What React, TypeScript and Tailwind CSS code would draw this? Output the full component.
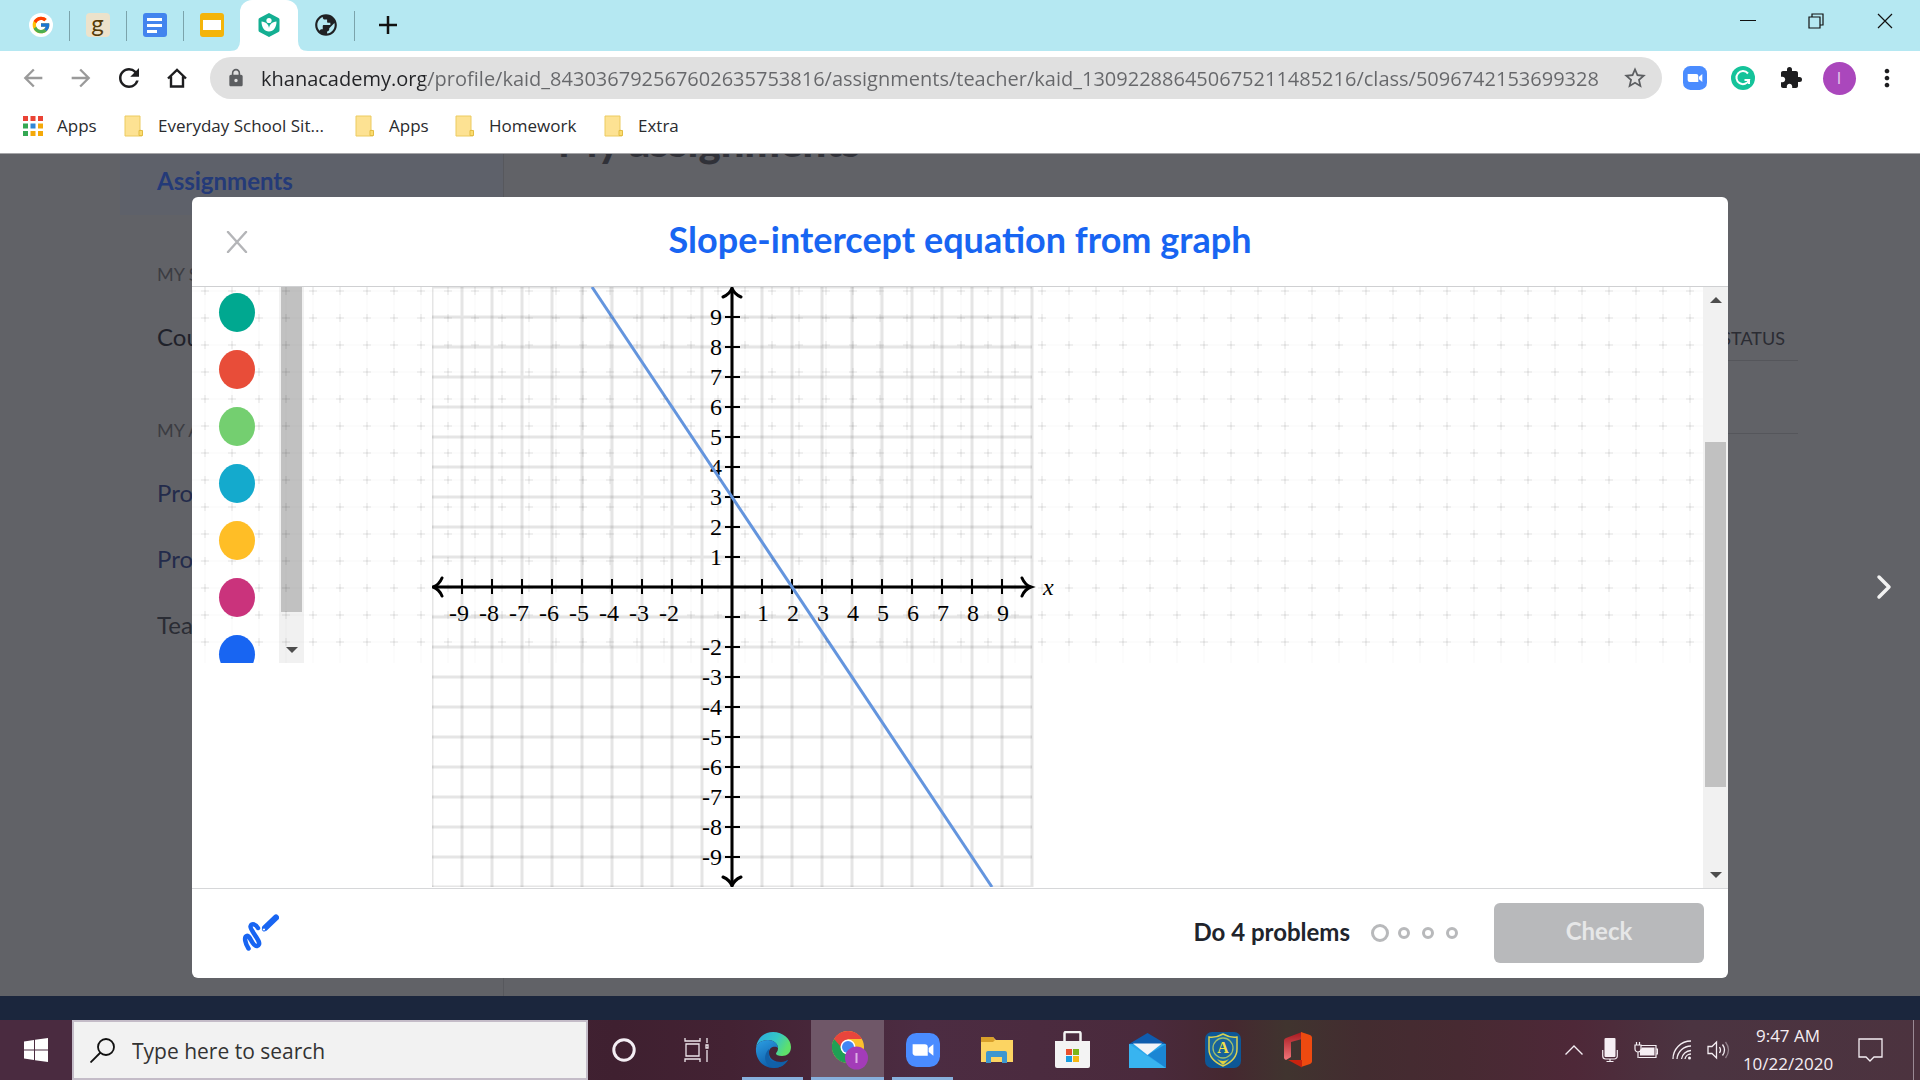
import React from "react";
import {
  MdArrowBack,
  MdArrowForward,
  MdExtension,
  MdLock,
  MdMoreVert,
  MdPublic,
  MdRefresh,
  MdStarBorder,
} from "react-icons/md";
import { FcGoogle } from "react-icons/fc";

const SANS = "font-['Open_Sans','Noto_Sans',sans-serif]";
const LATO = "font-['Lato','Open_Sans',sans-serif]";

const STUDENT = "kaid_843036792567602635753816";
const TEACHER = "kaid_1309228864506752" + "11485216";
const CLASS_ID = "5096742153699328";
const URL_TEXT = `khanacademy.org/profile/${STUDENT}/assignments/teacher/${TEACHER}/class/${CLASS_ID}`;

/* ---------- Browser chrome ---------- */

function ZoomLogo({ className }: { className: string }) {
  return (
    <svg viewBox="0 0 36 36" preserveAspectRatio="none" className={className} aria-hidden="true">
      <rect width="36" height="36" rx="11" fill="#4a8cff" />
      <path d="M7 12h13a3 3 0 0 1 3 3v9H10a3 3 0 0 1-3-3z" fill="#fff" />
      <path d="M24 16l5-4v12l-5-4z" fill="#fff" />
    </svg>
  );
}

function DocsIcon() {
  return (
    <svg viewBox="0 0 24 24" className="h-6 w-6" aria-hidden="true">
      <rect width="24" height="24" rx="3" fill="#4384ee" />
      <path d="M4 5h15v3H4zM4 11h15v3H4zM4 17h10v3H4z" fill="#fff" />
    </svg>
  );
}

function SlidesIcon() {
  return (
    <svg viewBox="0 0 24 24" className="h-6 w-6" aria-hidden="true">
      <rect width="24" height="24" rx="3" fill="#f4b40a" />
      <rect x="3" y="7" width="18" height="10" fill="#fff" />
    </svg>
  );
}

function LeafIcon() {
  return (
    <svg viewBox="0 0 24 24" className="h-6 w-6" aria-hidden="true">
      <path d="M12 0l9.500 5a2 2 0 0 1 1 2v10a2 2 0 0 1-1 2L12 24l-9.500-5a2 2 0 0 1-1-2V7a2 2 0 0 1 1-2z" fill="#14af92" />
      <circle cx="12" cy="7.500" r="2.600" fill="#fff" />
      <path d="M4.500 8.500c4.500 .3 7 3 7.500 6.500 .5-3.500 3-6.200 7.500-6.500 0 6-3 10-7.500 10S4.500 14.500 4.500 8.500z" fill="#fff" />
    </svg>
  );
}

function TabStrip() {
  return (
    <div className="flex h-[51px] items-stretch bg-[#b5e8f2]">
      <div className="flex flex-1 items-center pl-3">
        <button aria-label="Google tab" className="flex w-[57px] items-center justify-center pb-0.5">
          <span className="flex h-6 w-6 items-center justify-center rounded-full bg-white">
            <FcGoogle className="h-5 w-5" />
          </span>
        </button>
        <i className="-mr-px h-[30px] w-px bg-[#7ba3ab]" />
        <button aria-label="Goodreads tab" className="flex w-[57px] items-center justify-center pb-0.5">
          <span className="flex h-6 w-6 items-center justify-center rounded-sm bg-[#ece2cb] pb-1 font-['Lato',sans-serif] text-2xl leading-none text-[#553b08]">
            g
          </span>
        </button>
        <i className="-mr-px h-[30px] w-px bg-[#7ba3ab]" />
        <button aria-label="Docs tab" className="flex w-[57px] items-center justify-center pb-0.5">
          <DocsIcon />
        </button>
        <i className="-mr-px h-[30px] w-px bg-[#7ba3ab]" />
        <button aria-label="Slides tab" className="flex w-[57px] items-center justify-center pb-0.5">
          <SlidesIcon />
        </button>
        <button aria-label="Khan Academy tab" className="relative flex h-full w-[58px] items-center justify-center rounded-t-xl bg-white pb-0.5">
          <svg viewBox="0 0 10 10" className="absolute right-full bottom-0 h-[10px] w-[10px]" aria-hidden="true">
            <path d="M10 0v10H0Q10 10 10 0z" fill="#fff" />
          </svg>
          <svg viewBox="0 0 10 10" className="absolute bottom-0 left-full h-[10px] w-[10px]" aria-hidden="true">
            <path d="M0 0v10h10Q0 10 0 0z" fill="#fff" />
          </svg>
          <LeafIcon />
        </button>
        <button aria-label="New page tab" className="flex w-14 items-center justify-center pb-0.5 text-[#202124]">
          <MdPublic className="h-[26px] w-[26px] -scale-x-100" />
        </button>
        <i className="h-[30px] w-px bg-[#7ba3ab]" />
        <button aria-label="New tab" className="flex w-[66px] items-center justify-center pb-0.5">
          <svg viewBox="0 0 18 18" className="h-[18px] w-[18px]" aria-hidden="true">
            <path d="M9 0v18M0 9h18" stroke="#111" strokeWidth="2.500" />
          </svg>
        </button>
      </div>
      <div className="flex h-[42px] text-[#111]">
        <button aria-label="Minimize" className="flex w-[68px] items-center justify-center">
          <svg viewBox="0 0 16 16" className="h-4 w-4"><path d="M0 7.500h16" stroke="currentColor" /></svg>
        </button>
        <button aria-label="Restore" className="flex w-[68px] items-center justify-center">
          <svg viewBox="0 0 16 16" className="h-4 w-4" fill="none" stroke="currentColor" strokeWidth="1.200">
            <path d="M1 4h11v11H1zM4 4V1h11v11h-3" />
          </svg>
        </button>
        <button aria-label="Close window" className="flex w-[70px] items-center justify-center">
          <svg viewBox="0 0 16 16" className="h-4 w-4"><path d="M1 1l14 14M15 1L1 15" stroke="currentColor" strokeWidth="1.200" /></svg>
        </button>
      </div>
    </div>
  );
}

function Toolbar() {
  return (
    <div className="flex h-[54px] items-center bg-white px-[9px]">
      <button aria-label="Back" className="flex w-12 justify-center text-[#9a9a9a]"><MdArrowBack className="h-7 w-7" /></button>
      <button aria-label="Forward" className="flex w-12 justify-center text-[#9a9a9a]"><MdArrowForward className="h-7 w-7" /></button>
      <button aria-label="Reload" className="flex w-12 justify-center text-[#1d1d1f]"><MdRefresh className="h-[30px] w-[30px]" /></button>
      <button aria-label="Home" className="flex w-12 justify-center">
        <svg viewBox="0 0 20 20" className="h-5 w-5" fill="none" stroke="#1d1d1f" strokeWidth="2.400" aria-hidden="true">
          <path d="M1 10.500L10 2l9 8.500M4 8.500V18.500h12V8.500" />
        </svg>
      </button>
      <div className="ml-[9px] flex h-[42px] flex-1 items-center rounded-full bg-[#e0e0e0] pr-[14px] pl-4">
        <MdLock className="h-5 w-5 text-[#5c5e61]" />
        <input
          aria-label="Address"
          readOnly
          value={URL_TEXT}
          className={`${SANS} ml-[15px] min-w-0 flex-1 bg-[linear-gradient(90deg,#222326_0_164px,#66676a_164px)] bg-clip-text pt-0.5 text-[20px] leading-[32px] text-transparent outline-none`}
        />
        <button aria-label="Bookmark this page"><MdStarBorder className="h-[26px] w-[26px] text-[#5c5e61]" /></button>
      </div>
      <div className="ml-[9px] flex items-center">
        <button aria-label="Zoom extension" className="flex w-12 justify-center"><ZoomLogo className="h-6 w-6" /></button>
        <button aria-label="Grammarly" className="flex w-12 justify-center">
          <svg viewBox="0 0 24 24" className="h-6 w-6" fill="none" aria-hidden="true">
            <circle cx="12" cy="12" r="12" fill="#15c39a" />
            <path d="M17 7.500A6.500 6.500 0 1 0 18 14h-4.500M18 14v4" stroke="#fff" strokeWidth="2" />
          </svg>
        </button>
        <button aria-label="Extensions" className="flex w-12 justify-center text-[#1d1d1f]"><MdExtension className="h-6 w-6" /></button>
        <button aria-label="Profile" className="flex w-12 justify-center">
          <span className={`${SANS} flex h-[33px] w-[33px] items-center justify-center rounded-full bg-[#aa47bc] text-base text-[#e8cdee]`}>I</span>
        </button>
        <button aria-label="Menu" className="flex w-12 justify-center text-[#1d1d1f]"><MdMoreVert className="h-7 w-7" /></button>
      </div>
    </div>
  );
}

const APP_DOTS = ["#ea4335", "#ea4335", "#ea4335", "#34a853", "#3186d6", "#f4a90a", "#34a853", "#f4a90a", "#f4a90a"];

function Folder({ label, className }: { label: string; className: string }) {
  return (
    <a href="#" className={`flex items-center gap-[15px] ${className}`}>
      <svg viewBox="0 0 19 22" className="h-[22px] w-[19px]" aria-hidden="true">
        <path d="M1 1h15v14l2 1v5H1z" fill="#fde293" stroke="#eccb61" />
        <path d="M15 15.500h3.500v5H15z" fill="#fbdc70" stroke="#e3bd45" />
      </svg>
      {label}
    </a>
  );
}

function BookmarksBar() {
  return (
    <nav className={`${SANS} flex h-[49px] items-center border-b border-[#a5a5a8] bg-white pb-1.5 pl-[23px] text-[17px] leading-6 text-[#2a2b2e]`}>
      <a href="#" className="flex w-[101px] items-center gap-[14px]">
        <svg viewBox="0 0 20 20" className="h-5 w-5" aria-hidden="true">
          {APP_DOTS.map((c, i) => (
            <rect key={i} x={(i % 3) * 7.5} y={Math.floor(i / 3) * 7.5} width="5" height="5" fill={c} />
          ))}
        </svg>
        Apps
      </a>
      <Folder label="Everyday School Sit..." className="w-[231px]" />
      <Folder label="Apps" className="w-[100px]" />
      <Folder label="Homework" className="w-[149px]" />
      <Folder label="Extra" className="" />
    </nav>
  );
}

/* ---------- Dimmed page behind the dialog ---------- */

function BackgroundPage() {
  return (
    <div className={`${LATO} flex flex-1 overflow-hidden bg-[#616267] pl-[120px] text-2xl`}>
      <nav className="w-[384px] shrink-0 border-r border-[#57585d] text-[#24262e]">
        <a href="#" className="flex h-[61px] items-center bg-[#5e616a] pb-2 pl-[37px] font-bold text-[#243a78]">Assignments</a>
        <div className="flex flex-col pl-[37px]">
          <h2 className="mt-[47px] text-[18px] leading-6 text-[#3b3c42]">MY STUFF</h2>
          <a href="#" className="mt-[35px] leading-8 text-[#1f212a]">Courses</a>
          <h2 className="mt-[65px] text-[18px] leading-6 text-[#3b3c42]">MY ACCOUNT</h2>
          <a href="#" className="mt-[35px] leading-8 text-[#232b4b]">Progress</a>
          <a href="#" className="mt-[34px] leading-8 text-[#232b4b]">Profile</a>
          <a href="#" className="mt-[34px] leading-8 text-[#2a2c34]">Teachers</a>
        </div>
      </nav>
      <div className="mr-[122px] ml-[54px] flex-1">
        <h1 className="-mt-[38px] text-[42px] leading-[50px] font-black text-[#303138]">My assignments</h1>
        <div className="mt-[157px] border-b border-[#55565b] pr-[13px] pb-[7px] text-right text-[18px] leading-[30px] text-[#2b2c33]">STATUS</div>
        <div className="h-[73px] border-b border-[#55565b]" />
      </div>
    </div>
  );
}

/* ---------- Exercise dialog ---------- */

const UNIT = 30;
const TICKS = [-9, -8, -7, -6, -5, -4, -3, -2, -1, 1, 2, 3, 4, 5, 6, 7, 8, 9];
const GRID = Array.from({ length: 21 }, (_, i) => i * UNIT);

function Graph() {
  return (
    <svg viewBox="0 0 660 600" className="h-[600px] w-[660px] shrink-0" role="img" aria-label="Line with slope -3/2 and y-intercept 3">
      <g stroke="#000" strokeOpacity="0.1" strokeWidth="3">
        {GRID.map((p) => (
          <path key={p} d={`M${p} 0V600M0 ${p}H600`} />
        ))}
      </g>
      <g stroke="#000" fill="none">
        <path d="M2 300H598M300 2V598" strokeWidth="3" />
        <path
          d="M10 291Q7 298 1 300Q7 302 10 309M590 291Q593 298 599 300Q593 302 590 309M291 10Q298 7 300 1Q302 7 309 10M291 590Q298 593 300 599Q302 593 309 590"
          strokeWidth="3"
          strokeLinecap="round"
        />
        {TICKS.map((t) => (
          <path key={t} d={`M${300 + t * UNIT} 292v15M293 ${300 - t * UNIT}h15`} strokeWidth="2" />
        ))}
      </g>
      <g className="font-['Liberation_Serif',serif] text-[24px]" fill="#000">
        {TICKS.filter((t) => t !== -1).map((t) => (
          <React.Fragment key={t}>
            <text x={301 + t * UNIT - (t < 0 ? 4 : 0)} y="334" textAnchor="middle">{t}</text>
            <text x="290" y={308 - t * UNIT} textAnchor="end">{t}</text>
          </React.Fragment>
        ))}
        <text x="611" y="308" className="italic">x</text>
      </g>
      <path d="M160 0L560 600" stroke="#6495de" strokeWidth="3" />
    </svg>
  );
}

const PALETTE = [
  { name: "Teal", color: "bg-[#00a890]" },
  { name: "Red", color: "bg-[#e84d39]" },
  { name: "Green", color: "bg-[#74cf70]" },
  { name: "Cyan", color: "bg-[#14aacd]" },
  { name: "Yellow", color: "bg-[#ffbe26]" },
  { name: "Magenta", color: "bg-[#ca337c]" },
  { name: "Blue", color: "bg-[#1865f2]" },
];

function Arrow({ up = false }: { up?: boolean }) {
  return (
    <svg viewBox="0 0 12 6" className="h-[6px] w-3" aria-hidden="true">
      <path d={up ? "M0 6L6 0l6 6z" : "M0 0h12L6 6z"} fill="#4d4d4d" />
    </svg>
  );
}

function Whiteboard() {
  return (
    <div className="pointer-events-none absolute inset-x-0 top-0 h-[376px] overflow-hidden">
      <div className="absolute inset-y-0 left-[87px] flex w-[25px] flex-col items-center bg-[#f1f1f1]">
        <div className="h-[325px] w-[21px] bg-[#c1c1c1]" />
        <div className="mt-[35px]"><Arrow /></div>
      </div>
      <svg className="absolute inset-0 h-full w-full" aria-hidden="true">
        <defs>
          <pattern id="board" x="0" y="-9" width="27" height="27" patternUnits="userSpaceOnUse">
            <path d="M13 0V27M0 13H27" stroke="#000" strokeOpacity="0.025" />
            <path d="M13 9v8M9 13h8" stroke="#000" strokeOpacity="0.1" />
          </pattern>
        </defs>
        <rect width="100%" height="100%" fill="url(#board)" />
      </svg>
      <div className="absolute top-[6px] left-[27px] flex flex-col gap-[18px]">
        {PALETTE.map((p) => (
          <button key={p.name} aria-label={p.name} className={`h-[39px] w-9 shrink-0 rounded-[50%] ${p.color}`} />
        ))}
      </div>
    </div>
  );
}

function ExerciseDialog() {
  return (
    <div role="dialog" aria-label="Slope-intercept equation from graph" className={`${LATO} flex flex-1 flex-col overflow-hidden rounded-md bg-white`}>
      <header className="flex h-[90px] shrink-0 items-center border-b border-[#cfd0d2] px-[34px]">
        <button aria-label="Close" className="w-[22px]">
          <svg viewBox="0 0 22 22" className="h-[22px] w-[22px]" aria-hidden="true">
            <path d="M2 1l18 20M20 1L2 21" stroke="#b4b5b8" strokeWidth="2.400" strokeLinecap="round" />
          </svg>
        </button>
        <h2 className="mr-[22px] flex-1 pb-[5px] text-center text-[36px] leading-[44px] font-bold text-[#1865f2]">Slope-intercept equation from graph</h2>
      </header>
      <div className="flex min-h-0 flex-1">
        <div className="relative flex-1 overflow-hidden pl-60">
          <Graph />
          <Whiteboard />
        </div>
        <div className="flex w-[25px] flex-col items-center bg-[#f1f1f1]">
          <div className="flex h-[155px] items-start pt-[10px]"><Arrow up /></div>
          <div className="h-[345px] w-[21px] bg-[#c1c1c1]" />
          <div className="flex flex-1 items-end pb-[10px]"><Arrow /></div>
        </div>
      </div>
      <footer className="flex h-[90px] shrink-0 items-center border-t border-[#d6d7d9] pr-6 pb-0.5 pl-[50px]">
        <button aria-label="Scratchpad">
          <svg viewBox="0 0 37 37" className="h-[37px] w-[37px]" fill="none" stroke="#1865f2" strokeLinecap="round" strokeLinejoin="round" aria-hidden="true">
            <path d="M6.500 34.500C3 29 2 23 4.500 22C8.500 20.500 10 33 15 32C22.500 30 8 17 8.500 12.500C9.500 8.500 14 10.500 16 14" strokeWidth="4.500" />
            <path d="M23 14L34 3.500" strokeWidth="6" />
            <circle cx="22" cy="15.500" r="1.600" strokeWidth="1" fill="#fff" />
          </svg>
        </button>
        <span className="ml-auto pb-0.5 text-2xl leading-8 font-bold text-[#21242c]">Do 4 problems</span>
        <div className="mr-9 ml-[21px] flex items-center gap-3">
          <i className="-mr-[3px] h-[18px] w-[18px] rounded-full border-[3px] border-[#b8b9bb]" />
          <i className="h-3 w-3 rounded-full border-[3px] border-[#b8b9bb]" />
          <i className="h-3 w-3 rounded-full border-[3px] border-[#b8b9bb]" />
          <i className="h-3 w-3 rounded-full border-[3px] border-[#b8b9bb]" />
        </div>
        <button disabled className="h-[60px] w-[210px] rounded-md bg-[#b8b9bb] pb-1 text-2xl leading-8 font-bold text-[#e6e7e8]">Check</button>
      </footer>
    </div>
  );
}

/* ---------- Windows taskbar ---------- */

function EdgeLogo() {
  return (
    <svg viewBox="0 0 36 36" className="h-9 w-9" aria-hidden="true">
      <defs>
        <linearGradient id="eg1" x1="0" y1="0" x2="1" y2="0.4">
          <stop offset="0" stopColor="#2aa9e6" />
          <stop offset="0.6" stopColor="#35c7c5" />
          <stop offset="1" stopColor="#5fe06a" />
        </linearGradient>
        <linearGradient id="eg2" x1="0" y1="0" x2="0.6" y2="1">
          <stop offset="0" stopColor="#2c9fe3" />
          <stop offset="1" stopColor="#0a56a4" />
        </linearGradient>
      </defs>
      <path d="M1 16C2 6 9 0 18 0c10 0 18 7 18 15 0 6-4 9-9 9-4 0-6-1-6-2.500 0-1 2-2 2-5C23 11 18 8 13 8 7 8 2 11 1 16z" fill="url(#eg1)" />
      <path d="M1 16C2 11 7 8 13 8c5 0 10 3 10 8-2-2-9-2-9 5 0 6 6 9 12 9 3 0 5-1 7-2-3 5-8 8-15 8C8 36 0 27 1 16z" fill="url(#eg2)" />
      <path d="M14 21c-1 9 8 13 19 7-3 5-8 8-14 8C10 34 7 24 14 17z" fill="#1160a8" />
    </svg>
  );
}

function ChromeLogo() {
  return (
    <svg viewBox="0 0 36 40" className="ml-1 h-10 w-9" aria-hidden="true">
      <circle cx="16" cy="17" r="16" fill="#fbc02d" />
      <path d="M2.100 9A16 16 0 0 0 16 33l7-12-7-4z" fill="#1fa055" />
      <path d="M2.100 9A16 16 0 0 1 29.900 9H16L9 17z" fill="#e8453c" />
      <circle cx="16" cy="17" r="7.500" fill="#fff" />
      <circle cx="16" cy="17" r="6" fill="#4285f4" />
      <circle cx="24.500" cy="28" r="11.500" fill="#a33cb8" />
      <path d="M24.500 23v10" stroke="#dcb0e4" strokeWidth="2" />
    </svg>
  );
}

function ExplorerLogo() {
  return (
    <svg viewBox="0 0 33 28" className="h-7 w-[33px]" aria-hidden="true">
      <path d="M0 1h12l3 3h17v22H0z" fill="#fcd462" />
      <path d="M0 1h12l2 3-2 2H0z" fill="#d8a02a" />
      <path d="M5 27V17a2 2 0 0 1 2-2h17a2 2 0 0 1 2 2v10h-5v-6H10v6z" fill="#3d96cf" />
    </svg>
  );
}

function StoreLogo() {
  return (
    <svg viewBox="0 0 35 38" className="h-[38px] w-[35px]" aria-hidden="true">
      <path d="M9.500 11V2.500a1.500 1.500 0 0 1 1.500-1.500h13a1.500 1.500 0 0 1 1.500 1.500V11" fill="none" stroke="#f3f3f3" strokeWidth="2.500" />
      <path d="M0 10h35v25a2 2 0 0 1-2 2H2a2 2 0 0 1-2-2z" fill="#f3f3f3" />
      <path d="M11 18h6v6h-6z" fill="#e8502d" /><path d="M18 18h6v6h-6z" fill="#7cb518" />
      <path d="M11 25h6v6h-6z" fill="#1b9de0" /><path d="M18 25h6v6h-6z" fill="#f5b812" />
    </svg>
  );
}

function MailLogo() {
  return (
    <svg viewBox="0 0 37 35" className="h-[35px] w-[37px]" aria-hidden="true">
      <path d="M0 11L18.500 0 37 11z" fill="#0f5cae" />
      <path d="M0 11h37v24H0z" fill="#2ba6ea" />
      <path d="M0 11v24L37 35z" fill="#38b4f0" />
      <path d="M18.500 22L37 11v24z" fill="#1a86d4" />
      <path d="M4 10.500h29L18.500 22z" fill="#f2f4f8" />
    </svg>
  );
}

function CrestLogo() {
  return (
    <svg viewBox="0 0 36 36" className="h-9 w-9" aria-hidden="true">
      <rect width="36" height="36" rx="7" fill="#0d5796" />
      <path d="M4 5q7 1 14-3 7 4 14 3v12c0 9-7 14-14 17C11 31 4 26 4 17z" fill="#1a6aa0" stroke="#d8cf52" strokeWidth="1.500" />
      <circle cx="18" cy="16" r="10" fill="#17629b" stroke="#9ebd6e" strokeWidth="1.300" />
      <path d="M12 27q6 4 12 0l-6 6z" fill="#e3d23e" />
      <text x="18" y="21" textAnchor="middle" className="font-['Liberation_Serif',serif] text-[16px] font-bold" fill="#f0e04a">A</text>
    </svg>
  );
}

function OfficeLogo() {
  return (
    <svg viewBox="0 0 28 36" className="h-9 w-7" aria-hidden="true">
      <defs>
        <linearGradient id="of" x1="0" y1="0" x2="0" y2="1">
          <stop offset="0" stopColor="#a8191f" />
          <stop offset="1" stopColor="#f0757a" />
        </linearGradient>
      </defs>
      <path d="M18 0L2 6a3 3 0 0 0-2 3v17a3 3 0 0 0 2 2l5-3V10l11-3z" fill="url(#of)" />
      <path d="M17 0l9 3a3 3 0 0 1 2 3v23a3 3 0 0 1-2 3l-9 3z" fill="#ee4a10" />
      <path d="M4 28h14v7.500z" fill="#c8230f" />
    </svg>
  );
}

const APPS = [
  { name: "Microsoft Edge", icon: <EdgeLogo />, cell: "", bar: "w-[61px]" },
  { name: "Google Chrome", icon: <ChromeLogo />, cell: "bg-[#6f5768]", bar: "w-[73px]" },
  { name: "Zoom", icon: <ZoomLogo className="h-[34px] w-[34px]" />, cell: "", bar: "w-[61px]" },
  { name: "File Explorer", icon: <ExplorerLogo />, cell: "", bar: "" },
  { name: "Microsoft Store", icon: <StoreLogo />, cell: "", bar: "" },
  { name: "Mail", icon: <MailLogo />, cell: "", bar: "" },
  { name: "School portal", icon: <CrestLogo />, cell: "", bar: "" },
  { name: "Office", icon: <OfficeLogo />, cell: "", bar: "" },
];

function Taskbar() {
  return (
    <div className={`${SANS} flex h-[60px] shrink-0 bg-[linear-gradient(90deg,#4a2b40_0%,#4a2b40_5%,#3f2030_32%,#432233_38%,#4c2c42_48%,#4a2a3c_60%,#452830_64%,#40342f_67%,#432c30_71%,#472a32_76%,#4e2838_82%,#4b3441_88%,#4c333f_100%)]`}>
      <button aria-label="Start" className="flex w-[72px] items-center justify-center">
        <svg viewBox="0 0 24 24" className="h-6 w-6" fill="#fff" aria-hidden="true">
          <path d="M0 3.500l10-1.500v9.500H0zM11 1.800L24 0v11.500H11zM0 12.500h10V22L0 20.500zM11 12.500h13V24l-13-1.800z" />
        </svg>
      </button>
      <label className="flex w-[516px] items-center border-2 border-[#c4bcc8] bg-[#f2f2f2] pl-4">
        <svg viewBox="0 0 25 25" className="h-[25px] w-[25px]" fill="none" stroke="#111" strokeWidth="1.800" aria-hidden="true">
          <circle cx="16" cy="9" r="8" />
          <path d="M10.500 14.500L0.500 24.500" />
        </svg>
        <input aria-label="Search" placeholder="Type here to search" className="ml-[17px] min-w-0 flex-1 bg-transparent pt-0.5 text-[21px] leading-8 text-[#333] outline-none placeholder:text-[#333]" />
      </label>
      <button aria-label="Cortana" className="flex w-[72px] items-center justify-center">
        <svg viewBox="0 0 24 24" className="h-6 w-6" aria-hidden="true"><circle cx="12" cy="12" r="10.200" fill="none" stroke="#f4eef4" strokeWidth="3" /></svg>
      </button>
      <button aria-label="Task view" className="flex w-[75px] items-center justify-center pr-[3px]">
        <svg viewBox="0 0 25 24" className="h-6 w-[25px]" fill="none" stroke="#eee6ec" strokeWidth="1.300" aria-hidden="true">
          <path d="M2 6h13v12H2zM1 0v3h15V0M1 24v-3h15v3M23 0v5M23 12v12M22 7h2v3h-2z" />
        </svg>
      </button>
      {APPS.map((a) => (
        <button key={a.name} aria-label={a.name} className="relative flex w-[75px] justify-center">
          <span className={`flex h-full w-[73px] items-center justify-center ${a.cell}`}>{a.icon}</span>
          <i className={`absolute bottom-0 h-[3px] bg-[#87b0dd] ${a.bar}`} />
        </button>
      ))}
      <div className="ml-auto flex items-center text-[#f5eef3]">
        <button aria-label="Show hidden icons" className="flex w-9 justify-center">
          <svg viewBox="0 0 18 10" className="h-[10px] w-[18px]" fill="none" stroke="currentColor" strokeWidth="1.400"><path d="M0.500 9.500L9 1l8.500 8.500" /></svg>
        </button>
        <button aria-label="Microphone" className="flex w-9 justify-center">
          <svg viewBox="0 0 16 24" className="h-6 w-4"><rect x="2.500" width="11" height="19" rx="1" fill="currentColor" /><path d="M0.700 12v6a3 3 0 0 0 3 3h8.600a3 3 0 0 0 3-3v-6M8 21v2.500M4.500 23.500h7" fill="none" stroke="currentColor" strokeWidth="1.200" /></svg>
        </button>
        <button aria-label="Battery" className="flex w-9 justify-center">
          <svg viewBox="0 0 24 17" className="h-[17px] w-6" fill="none" stroke="currentColor" strokeWidth="1.200"><path d="M7 3.500h15v12H4.500M22.500 7h1v5h-1" /><path d="M8 5.500h12.500v8H6V9z" fill="currentColor" stroke="none" /><path d="M1 3h6v4a3 3 0 0 1-6 0zM2.500 0v3M5.500 0v3M4 10v6" /></svg>
        </button>
        <button aria-label="Wi-Fi" className="flex w-9 justify-center">
          <svg viewBox="0 0 20 20" className="h-5 w-5" fill="none" stroke="currentColor" strokeWidth="1.300"><path d="M1 19A18 18 0 0 1 19 1M5 19A14 14 0 0 1 19 6M9.500 19A10 10 0 0 1 19 10.500M13 19a6 6 0 0 1 6-5" /><circle cx="17.500" cy="18" r="1.500" fill="currentColor" stroke="none" /></svg>
        </button>
        <button aria-label="Volume" className="flex w-9 justify-center">
          <svg viewBox="0 0 23 20" className="h-5 w-[23px]" fill="none" stroke="currentColor" strokeWidth="1.300"><path d="M1 6.500h4L9.500 2v16L5 13.500H1zM12.500 7q2 3 0 6M15.500 4.500q4 5.500 0 11" /><path d="M18.500 2q6 8 0 16" opacity="0.4" /></svg>
        </button>
        <button className="w-[104px] text-center text-[17px] leading-7">
          <span className="block">9:47 AM</span>
          <span className="block">10/22/2020</span>
        </button>
        <button aria-label="Notifications" className="flex w-[60px] justify-center">
          <svg viewBox="0 0 25 24" className="h-6 w-[25px]" fill="none" stroke="currentColor" strokeWidth="1.300"><path d="M1 1h23v18h-8l-4 4-4-4H1z" /></svg>
        </button>
        <i className="mr-[6px] ml-[13px] h-[60px] w-px bg-[#9a8a94]" />
      </div>
    </div>
  );
}

export default function App() {
  return (
    <div className="flex h-screen flex-col overflow-hidden bg-white">
      <TabStrip />
      <Toolbar />
      <BookmarksBar />
      <main className="relative flex min-h-0 flex-1 flex-col">
        <BackgroundPage />
        <div className="h-6 shrink-0 bg-[#1b263d]" />
        <div className="absolute inset-x-0 top-0 bottom-6 flex px-[10%] pt-[43px] pb-[18px]">
          <ExerciseDialog />
          <button aria-label="Next" className="absolute top-[420px] right-7">
            <svg viewBox="0 0 16 26" className="h-[26px] w-4" fill="none" stroke="#f2f2f2" strokeWidth="3.500" strokeLinecap="round" strokeLinejoin="round" aria-hidden="true">
              <path d="M3 3l10 10L3 23" />
            </svg>
          </button>
        </div>
      </main>
      <Taskbar />
    </div>
  );
}
